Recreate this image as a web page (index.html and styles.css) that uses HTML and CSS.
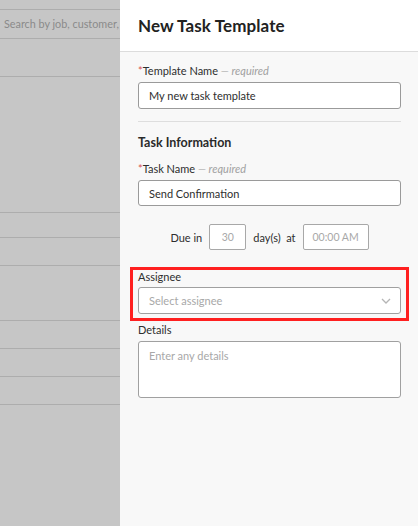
FILE: index.html
```html
<!DOCTYPE html>
<html lang="en">
<head>
    <meta charset="UTF-8">
    <meta name="viewport" content="width=device-width, initial-scale=1.0">
    <title>New Task Template</title>
    <link rel="stylesheet" href="styles.css">
</head>
<body>
    <div class="backdrop">
        <div class="bd-row bd-top"></div>
        <div class="bd-row bd-search">Search by job, customer,</div>
        <div class="bd-row bd-h37"></div>
        <div class="bd-row bd-h135"></div>
        <div class="bd-row bd-h24"></div>
        <div class="bd-row bd-h27"></div>
        <div class="bd-row bd-h54"></div>
        <div class="bd-row bd-h27"></div>
        <div class="bd-row bd-h27"></div>
        <div class="bd-row bd-h27"></div>
    </div>

    <div class="drawer">
        <div class="drawer-header">
            <h1>New Task Template</h1>
        </div>
        <div class="drawer-body">
            <label class="field-label first" for="template-name"><span class="req">*</span>Template Name <em>— required</em></label>
            <input type="text" id="template-name" class="text-input" value="My new task template">

            <hr class="divider">

            <h2 class="section-title">Task Information</h2>

            <label class="field-label" for="task-name"><span class="req">*</span>Task Name <em>— required</em></label>
            <input type="text" id="task-name" class="text-input short" value="Send Confirmation">

            <div class="due-row">
                <span>Due in</span>
                <input type="text" class="small-input days" placeholder="30">
                <span>day(s)&nbsp; at</span>
                <input type="text" class="small-input time" placeholder="00:00 AM">
            </div>

            <div class="highlight">
                <label class="field-label tight" for="assignee">Assignee</label>
                <div class="select-box" id="assignee">
                    <span class="placeholder">Select assignee</span>
                    <svg class="chevron" width="10" height="6" viewBox="0 0 10 6">
                        <path d="M1 1 L5 5 L9 1" fill="none" stroke="#b5b5b5" stroke-width="1.3"/>
                    </svg>
                </div>
            </div>

            <label class="field-label details-label" for="details">Details</label>
            <textarea id="details" class="text-area" placeholder="Enter any details"></textarea>
        </div>
    </div>
</body>
</html>
```

FILE: styles.css
```css
* {
    box-sizing: border-box;
}
body {
    display: flex;
    margin: 0;
    padding: 0;
    height: 526px;
    overflow: hidden;
    font-family: Lato, "Open Sans", sans-serif;
    color: #2e2e2e;
}
.backdrop {
    width: 120px;
    flex-shrink: 0;
    background-color: #c6c6c6;
    overflow: hidden;
}
.bd-row {
    border-bottom: 1px solid #adadad;
}
.bd-top {
    height: 10px;
}
.bd-search {
    height: 29px;
    padding-left: 4px;
    font-size: 10.8px;
    line-height: 27px;
    color: #8a8a8a;
    white-space: nowrap;
}
.bd-h37 { height: 38px; }
.bd-h135 { height: 136px; }
.bd-h24 { height: 25px; }
.bd-h27 { height: 28px; }
.bd-h54 { height: 55px; }

.drawer {
    flex: 1;
    background-color: #f8f8f8;
}
.drawer-header {
    height: 52px;
    background-color: #fff;
    border-bottom: 1px solid #dcdcdc;
    padding-left: 18px;
}
.drawer-header h1 {
    margin: 0;
    font-size: 17px;
    font-weight: 700;
    line-height: 52px;
    color: #222;
    letter-spacing: 0.1px;
}
.drawer-body {
    padding: 0 17px 0 18px;
}
.field-label {
    display: block;
    font-size: 11px;
    line-height: 14px;
    margin-bottom: 4px;
    color: #2e2e2e;
}
.field-label.first {
    padding-top: 12px;
}
.field-label em {
    color: #a0a0a0;
}
.req {
    color: #d9534f;
}
.text-input {
    display: block;
    width: 100%;
    height: 27px;
    padding: 0 10px;
    border: 1px solid #9a9a9a;
    border-radius: 3px;
    background: #fff;
    font-family: inherit;
    font-size: 11px;
    color: #2e2e2e;
}
.text-input.short {
    height: 26px;
}
.divider {
    border: none;
    border-top: 1px solid #dedede;
    margin: 12px 0 0;
}
.section-title {
    margin: 13px 0 11px;
    font-size: 12.5px;
    font-weight: 700;
    line-height: 16px;
    color: #2a2a2a;
}
.due-row {
    display: flex;
    justify-content: center;
    align-items: center;
    gap: 7px;
    margin-top: 18px;
    font-size: 11px;
}
.small-input {
    height: 26px;
    border: 1px solid #a8a8a8;
    border-radius: 2px;
    background: #fff;
    font-family: inherit;
    font-size: 10.5px;
    text-align: center;
    padding: 0;
}
.small-input::placeholder {
    color: #a8a8a8;
}
.small-input.days {
    width: 37px;
}
.small-input.time {
    width: 66px;
}
.highlight {
    margin: 17px -8px 0;
    border: 3px solid #ff2020;
    padding: 0 5px 4px;
}
.field-label.tight {
    margin-bottom: 3px;
}
.select-box {
    display: flex;
    align-items: center;
    justify-content: space-between;
    height: 27px;
    padding: 0 9px 0 10px;
    border: 1px solid #a0a0a0;
    border-radius: 3px;
    background: #fff;
}
.placeholder {
    font-size: 11px;
    color: #a8a8a8;
}
.details-label {
    margin-top: 2px;
}
.text-area {
    display: block;
    width: 100%;
    height: 57px;
    padding: 7px 10px;
    border: 1px solid #a0a0a0;
    border-radius: 3px;
    background: #fff;
    font-family: inherit;
    font-size: 11px;
    resize: none;
}
.text-area::placeholder {
    color: #a8a8a8;
}
```
